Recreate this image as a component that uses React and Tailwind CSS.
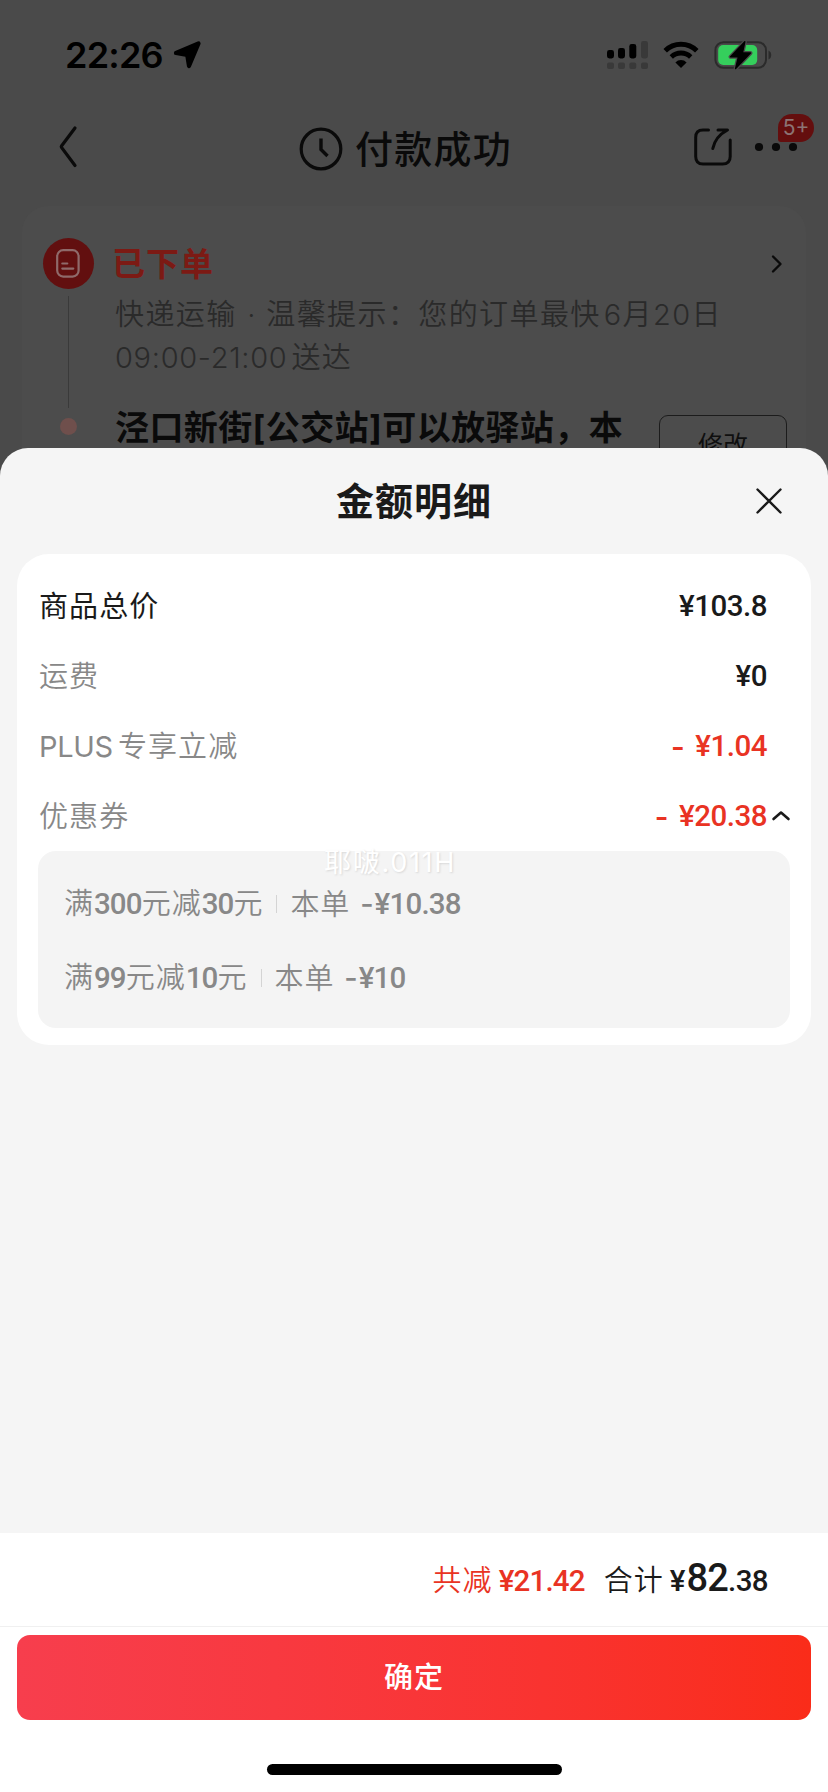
import React from "react";

const cjk = "font-['Inter','Noto_Sans_CJK_SC',sans-serif]";
const num = "font-['Roboto','Noto_Sans_CJK_SC',sans-serif]";

function StatusBar() {
  return (
    <div className="flex h-[109px] items-center pl-[65px] pr-[55px]">
      <span className="text-[36px] font-semibold leading-none tracking-[-0.8px] text-black font-['Inter',sans-serif]">22:26</span>
      <svg className="ml-[9px]" width="30" height="30" viewBox="0 0 30 30">
        <path d="M26.5 3.5 L17 26 L15.2 15 L4 13 Z" fill="#000" stroke="#000" strokeWidth="4.2" strokeLinejoin="round" />
      </svg>
      <div className="flex-1" />
      <svg width="42" height="28" viewBox="0 0 42 28">
        <g fill="#000">
          <rect x="0" y="9" width="7" height="8.5" rx="2.4" />
          <rect x="11" y="7" width="7" height="10.5" rx="2.4" />
          <rect x="22.3" y="3" width="7" height="14.5" rx="2.4" />
        </g>
        <g fill="#393939">
          <rect x="34" y="0" width="7" height="17.5" rx="2.4" />
          <rect x="0" y="21.5" width="7" height="6.5" rx="2" />
          <rect x="11" y="21.5" width="7" height="6.5" rx="2" />
          <rect x="22.3" y="21.5" width="7" height="6.5" rx="2" />
          <rect x="34" y="21.5" width="7" height="6.5" rx="2" />
        </g>
      </svg>
      <svg className="ml-[14px]" width="36" height="28" viewBox="0 0 36 28" fill="none" stroke="#000">
        <path d="M2.2 9.8 A22.6 22.6 0 0 1 33.8 9.8" strokeWidth="5" />
        <path d="M8.3 15.9 A14 14 0 0 1 27.7 15.9" strokeWidth="4.8" />
        <path d="M18 27 L12.4 21.4 A8 8 0 0 1 23.6 21.4 Z" fill="#000" stroke="none" />
      </svg>
      <svg className="ml-[15px]" width="59" height="30" viewBox="0 0 59 30">
        <rect x="1.4" y="2.2" width="50.6" height="25.6" rx="8" fill="none" stroke="#2b2b2b" strokeWidth="2" />
        <path d="M54.5 10.5 a5 5 0 0 1 0 9 Z" fill="#2b2b2b" />
        <rect x="4.2" y="5" width="39" height="20" rx="5" fill="#35cf5c" />
        <path d="M30.8 1.8 L16.6 16.8 H24.4 L21.6 28.6 L36.4 13 H28.4 Z" fill="#000" stroke="#4a4a4a" strokeWidth="4" strokeLinejoin="round" />
        <path d="M30.8 1.8 L16.6 16.8 H24.4 L21.6 28.6 L36.4 13 H28.4 Z" fill="#000" stroke="#000" strokeWidth="1.4" strokeLinejoin="round" />
      </svg>
    </div>
  );
}

function NavBar() {
  return (
    <div className="flex h-[78px] items-center justify-between pl-[56px] pr-[12px]">
      <svg className="w-[200px] -translate-y-[2px]" width="200" height="46" viewBox="0 0 200 46">
        <path d="M19 5 L5.5 23 Q5 23.7 5.5 24.4 L19 42.5" fill="none" stroke="#0a0a0a" strokeWidth="3.2" strokeLinecap="round" strokeLinejoin="round" />
      </svg>
      <div className="flex items-center gap-[12px] pt-px">
        <svg width="44" height="44" viewBox="0 0 44 44" fill="none" stroke="#0a0a0a">
          <circle cx="22" cy="22" r="19.8" strokeWidth="3.2" />
          <path d="M22 11.5 V22.5 L28.5 29" strokeWidth="3.4" />
        </svg>
        <span className={`${cjk} text-[38px] font-medium leading-none tracking-[1.2px] text-[#0a0a0a]`}>付款成功</span>
      </div>
      <div className="relative flex w-[261px] items-center justify-end pb-[2px] pr-[18px]">
        <svg width="40" height="40" viewBox="0 0 40 40" fill="none" stroke="#0a0a0a" strokeWidth="3" strokeLinecap="round" strokeLinejoin="round">
          <path d="M15.5 3 H10 Q2.7 3 2.7 10.5 V29.5 Q2.7 37 10 37 H29.5 Q37.2 37 37.2 29.5 V13" />
          <path d="M25 3 H34.5 C26 7.5 21.5 13 19.8 21.5" />
        </svg>
        <svg className="ml-[21px]" width="44" height="10" viewBox="0 0 44 10" fill="#0a0a0a">
          <circle cx="5" cy="5" r="4.1" />
          <circle cx="22" cy="5" r="4.1" />
          <circle cx="39" cy="5" r="4.1" />
        </svg>
        <span className="absolute -top-[13px] right-[2px] flex h-[28px] w-[36px] items-center justify-center rounded-[14px] rounded-bl-[3px] bg-[#640e0e] pb-px text-[21px] leading-none text-[#8c7474] font-['Inter',sans-serif]">5+</span>
      </div>
    </div>
  );
}

function OrderCard() {
  return (
    <div className="mx-[22px] mt-[19px] flex h-[300px] rounded-[26px] bg-[#4c4c4c] pt-[32px]">
      <div className="flex w-[92px] flex-col items-center">
        <div className="flex size-[51px] items-center justify-center rounded-full bg-[#620f0f]">
          <svg width="24" height="29" viewBox="0 0 24 29" fill="none" stroke="#8f6a6a" strokeWidth="2.2" strokeLinecap="round">
            <rect x="1.2" y="1.2" width="21.4" height="26.4" rx="6" />
            <path d="M6.3 14.5 H11.3 M6.3 19.6 H17.3" />
          </svg>
        </div>
        <div className="mt-[7px] h-[112px] w-px bg-[#3a3a3a]" />
        <div className="mt-[10px] size-[17px] rounded-full bg-[#6f4f4c]" />
      </div>
      <div className="flex-1">
        <div className="flex h-[51px] items-center justify-between pr-[23px]">
          <span className={`${cjk} -ml-[2px] pt-[2px] text-[33px] font-bold leading-none tracking-[1px] text-[#7c1a14]`}>已下单</span>
          <svg width="12" height="20" viewBox="0 0 12 20" fill="none" stroke="#0a0a0a" strokeWidth="2.4" strokeLinecap="round" strokeLinejoin="round">
            <path d="M2 2.5 L9.5 10 L2 17.5" />
          </svg>
        </div>
        <div className={`${cjk} mt-[4px] pl-px text-[29px] font-[350] leading-[43px] tracking-[1.4px] text-[#2a2a2a]`}>
          <div className="whitespace-nowrap">
            快递运输 <span className="ml-px">·</span> 温馨提示：您的订单最快<span className="ml-[3px]">6</span>月<span>20</span>日
          </div>
          <div className="whitespace-nowrap"><span className="mr-[4px] tracking-[0.7px]">09:00-21:00</span>送达</div>
        </div>
        <div className="mt-[25px] flex items-start justify-between pl-px pr-[19px]">
          <span className={`${cjk} -mt-px whitespace-nowrap text-[34px] font-bold leading-[50px] tracking-[0.4px] text-[#0a0a0a]`}>泾口新街[公交站]可以放驿站，本</span>
          <div className={`${cjk} mt-[11px] flex h-[62px] w-[128px] items-center justify-center rounded-[9px] border border-[#1c1c1c] text-[25px] text-[#0f0f0f]`}>修改</div>
        </div>
      </div>
    </div>
  );
}

function Row({ prefix, label, value, dark, red, arrow }) {
  return (
    <div className="flex h-[70px] items-center justify-between pl-[22px] pr-[44px]">
      <span className={`${cjk} text-[29px] leading-none tracking-[1.1px] ${dark ? "text-[#1a1a1a]" : "font-[350] text-[#888888]"}`}>
        {prefix && <span className="mr-[5px] font-normal tracking-[-0.3px]">{prefix}</span>}
        {label}
      </span>
      <span className={`${num} relative flex pt-[2px] text-[29.5px] font-medium leading-none tracking-[-0.5px] ${red ? "text-[#e93323]" : "text-[#1a1a1a]"}`}>
        {red && <span className="mr-[11px] font-semibold font-['Inter',sans-serif]">-</span>}
        {value}
        {arrow && (
          <svg className="absolute left-full top-[10px] ml-[4px]" width="20" height="12" viewBox="0 0 20 12" fill="none" stroke="#1a1a1a" strokeWidth="2.6" strokeLinecap="round" strokeLinejoin="round">
            <path d="M2.5 9 L10 2.5 L17.5 9" />
          </svg>
        )}
      </span>
    </div>
  );
}

function N({ children }) {
  return <span className={`${num} text-[29.5px] font-medium tracking-[-0.8px]`}>{children}</span>;
}

function Coupon({ full, cut, amount }) {
  return (
    <div className={`${cjk} flex h-[74px] items-center text-[29px] font-[350] leading-none tracking-[0.9px] text-[#888888]`}>
      <span>满<N>{full}</N>元减<N>{cut}</N>元</span>
      <span className="ml-[13px] mr-[13px] h-[18px] w-px bg-[#d4d4d4]" />
      <span>本单</span>
      <span className="ml-[10px]"><span className="font-medium">-</span><N>¥{amount}</N></span>
    </div>
  );
}

function Sheet() {
  return (
    <div className="flex flex-1 flex-col overflow-hidden rounded-t-[28px] bg-[#f5f5f5]">
      <div className="relative flex h-[106px] items-center justify-center">
        <span className={`${cjk} text-[38px] font-bold leading-none tracking-[1px] text-[#1a1a1a]`}>金额明细</span>
        <svg className="absolute right-[46px] top-[40px]" width="26" height="26" viewBox="0 0 26 26" stroke="#1a1a1a" strokeWidth="2.4" strokeLinecap="round">
          <path d="M1.5 1.5 L24.5 24.5 M24.5 1.5 L1.5 24.5" />
        </svg>
      </div>
      <div className="relative mx-[17px] h-[491px] rounded-[32px] bg-white pt-[17px]">
        <Row label="商品总价" value="¥103.8" dark />
        <Row label="运费" value="¥0" />
        <Row prefix="PLUS" label="专享立减" value="¥1.04" red />
        <Row label="优惠券" value="¥20.38" red arrow />
        <div className="ml-[21px] mr-[21px] h-[177px] rounded-[18px] bg-[#f4f4f4] pl-[26px] pt-[16px]">
          <Coupon full="300" cut="30" amount="10.38" />
          <Coupon full="99" cut="10" amount="10" />
        </div>
        <span className={`${cjk} absolute left-[307px] top-[295px] whitespace-nowrap text-[27px] leading-[28px] tracking-[1.7px] text-white [text-shadow:1px_1px_2px_#d8d8d8]`}>耶啵.011H</span>
      </div>
      <div className="flex-1" />
      <div className="h-[259px] bg-white">
        <div className="flex h-[94px] items-baseline justify-end border-b border-[#f0f0f0] pr-[60px] pt-[17px]">
          <span className={`${cjk} text-[29px] font-[350] leading-[44px] tracking-[1px] text-[#e93323]`}>共减</span>
          <span className={`${num} ml-[6px] text-[29.5px] font-medium tracking-[-0.8px] text-[#e93323]`}>¥21.42</span>
          <span className={`${cjk} ml-[19px] text-[29px] font-[350] tracking-[1px] text-[#1a1a1a]`}>合计</span>
          <span className={`${num} ml-[6px] mr-px text-[29.5px] font-medium text-[#1a1a1a]`}>¥</span>
          <span className={`${num} text-[38px] font-medium tracking-[-0.8px] text-[#1a1a1a]`}>82</span>
          <span className={`${num} text-[29.5px] font-medium tracking-[-0.6px] text-[#1a1a1a]`}>.38</span>
        </div>
        <div className={`${cjk} mx-[17px] mt-[8px] flex h-[85px] items-center justify-center rounded-[13px] bg-linear-to-r from-[#f73e4d] to-[#fa2c19] pt-px text-[29px] font-medium tracking-[1px] text-white`}>确定</div>
        <div className="mx-auto mt-[44px] h-[11px] w-[295px] rounded-full bg-black" />
      </div>
    </div>
  );
}

export default function App() {
  return (
    <div className="flex h-[1792px] w-[828px] flex-col overflow-hidden bg-[#4a4a4a]">
      <div className="h-[448px] shrink-0 overflow-hidden">
        <StatusBar />
        <NavBar />
        <OrderCard />
      </div>
      <Sheet />
    </div>
  );
}
